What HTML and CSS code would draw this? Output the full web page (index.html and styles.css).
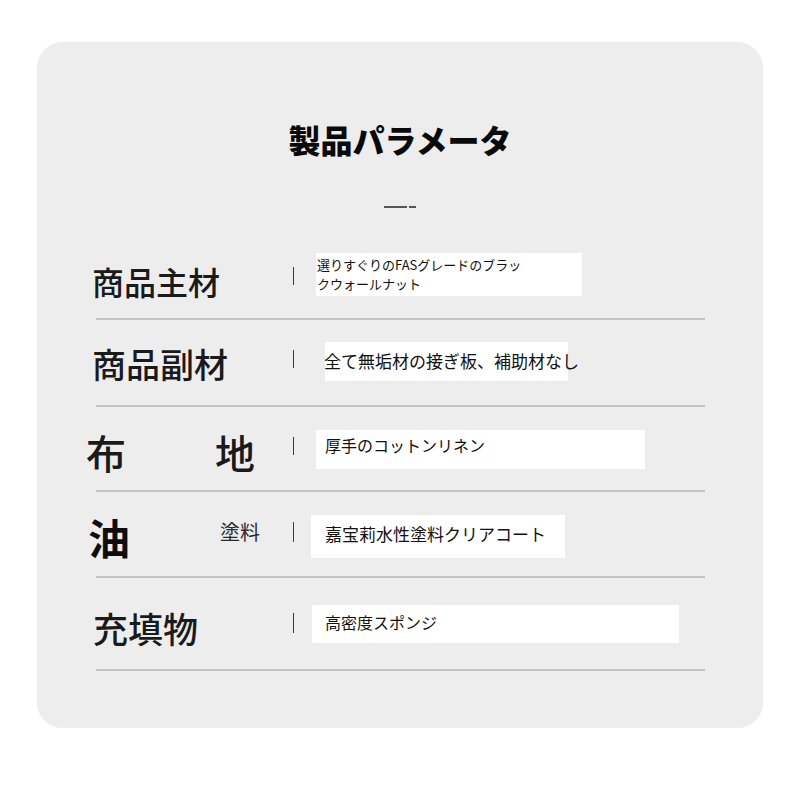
FILE: index.html
```html
<!DOCTYPE html>
<html lang="ja">
<head>
<meta charset="utf-8">
<title>製品パラメータ</title>
<link rel="stylesheet" href="styles.css">
</head>
<body>
<div class="card">
  <h1 class="title">製品パラメータ</h1>
  <div class="dash"><span class="dash-long"></span><span class="dash-short"></span></div>
  <div class="table">
    <div class="row r1">
      <div class="label">商品主材</div>
      <div class="bar"></div>
      <div class="value"><div class="line">選りすぐりのFASグレードのブラッ</div><div class="line">クウォールナット</div></div>
    </div>
    <div class="row r2">
      <div class="label">商品副材</div>
      <div class="bar"></div>
      <div class="value">全て無垢材の接ぎ板、補助材なし</div>
    </div>
    <div class="row r3">
      <div class="label split"><span>布</span><span>地</span></div>
      <div class="bar"></div>
      <div class="value">厚手のコットンリネン</div>
    </div>
    <div class="row r4">
      <div class="label split"><span class="big">油</span><span class="small">塗料</span></div>
      <div class="bar"></div>
      <div class="value">嘉宝莉水性塗料クリアコート</div>
    </div>
    <div class="row r5">
      <div class="label">充填物</div>
      <div class="bar"></div>
      <div class="value">高密度スポンジ</div>
    </div>
  </div>
</div>
</body>
</html>
```

FILE: styles.css
```css
html, body {
  margin: 0;
  padding: 0;
  background: #ffffff;
}

body {
  font-family: "Noto Sans CJK JP", "Noto Sans", sans-serif;
  color: #1a1a1a;
  padding-top: 42px;
}

.card {
  box-sizing: border-box;
  margin-left: 37px;
  width: 726px;
  height: 686px;
  background: #eeeded;
  border-radius: 26px;
  padding-top: 77px;
  box-shadow: 0 0 2px rgba(0, 0, 0, 0.04);
}

.title {
  margin: 0;
  font-size: 32px;
  line-height: 40px;
  font-weight: 900;
  text-align: center;
  color: #0a0a0a;
}

.dash {
  display: flex;
  justify-content: center;
  gap: 2px;
  margin-top: 47px;
  height: 2px;
}

.dash-long {
  width: 23px;
  height: 2px;
  background: #555;
}

.dash-short {
  width: 7px;
  height: 2px;
  background: #555;
}

.table {
  margin: 25px 58px 0 59px;
}

.row {
  box-sizing: border-box;
  display: grid;
  grid-template-columns: 197px 1px 1fr;
  align-items: end;
  padding-bottom: 22px;
  border-bottom: 2px solid #c3c3c3;
}

.label {
  margin-left: -4px;
  font-weight: 500;
  color: #1a1a1a;
  white-space: nowrap;
}

.bar {
  width: 1px;
  height: 18px;
  background: #3a3a3a;
}

.value {
  background: #ffffff;
  color: #111;
  white-space: nowrap;
  box-sizing: border-box;
}

/* Row 1 */
.r1 { height: 87px; }
.r1 .label { font-size: 32px; line-height: 40px; margin-bottom: -5px; }
.r1 .bar { margin-bottom: 11px; }
.r1 .value {
  margin-left: 22px;
  width: 266px;
  height: 43px;
  padding: 2px 0 0 1px;
  font-size: 13px;
}
.r1 .line {
  height: 19px;
  line-height: 19px;
}

/* Row 2 */
.r2 { height: 87px; }
.r2 .label { font-size: 34px; line-height: 40px; margin-bottom: -1px; }
.r2 .bar { margin-bottom: 15px; }
.r2 .value {
  margin-left: 31px;
  margin-bottom: 2px;
  width: 243px;
  height: 39px;
  padding: 7px 0 0 0;
  font-size: 17px;
  line-height: 24px;
  text-indent: -1px;
}

/* Row 3 */
.r3 { height: 85px; }
.r3 .label {
  font-size: 40px;
  line-height: 44px;
  margin-left: -10px;
  margin-bottom: -6px;
  width: 169px;
}
.r3 .bar { margin-bottom: 13px; }
.r3 .value {
  margin-left: 22px;
  margin-bottom: -1px;
  width: 329px;
  height: 39px;
  padding: 3px 0 0 9px;
  font-size: 16px;
  line-height: 24px;
}

.split {
  display: flex;
  justify-content: space-between;
  align-items: flex-end;
}

/* Row 4 */
.r4 { height: 86px; }
.r4 .label {
  margin-left: -8px;
  margin-bottom: -7px;
  width: 172px;
}
.r4 .big {
  font-size: 42px;
  line-height: 48px;
  font-weight: 700;
  color: #0d0d0d;
}
.r4 .small {
  font-size: 20px;
  line-height: 24px;
  margin-bottom: 17px;
  font-weight: 400;
  color: #2a2a2a;
}
.r4 .bar { margin-bottom: 12px; height: 20px; }
.r4 .value {
  margin-left: 17px;
  margin-bottom: -4px;
  width: 254px;
  height: 43px;
  padding: 7px 0 0 14px;
  font-size: 17px;
  line-height: 24px;
}

/* Row 5 */
.r5 { height: 93px; }
.r5 .label { font-size: 35px; line-height: 40px; margin-left: -3px; margin-bottom: -1px; }
.r5 .bar { margin-bottom: 14px; height: 20px; }
.r5 .value {
  margin-left: 18px;
  margin-bottom: 4px;
  width: 367px;
  height: 38px;
  padding: 5px 0 0 13px;
  font-size: 16px;
  line-height: 24px;
}
```
